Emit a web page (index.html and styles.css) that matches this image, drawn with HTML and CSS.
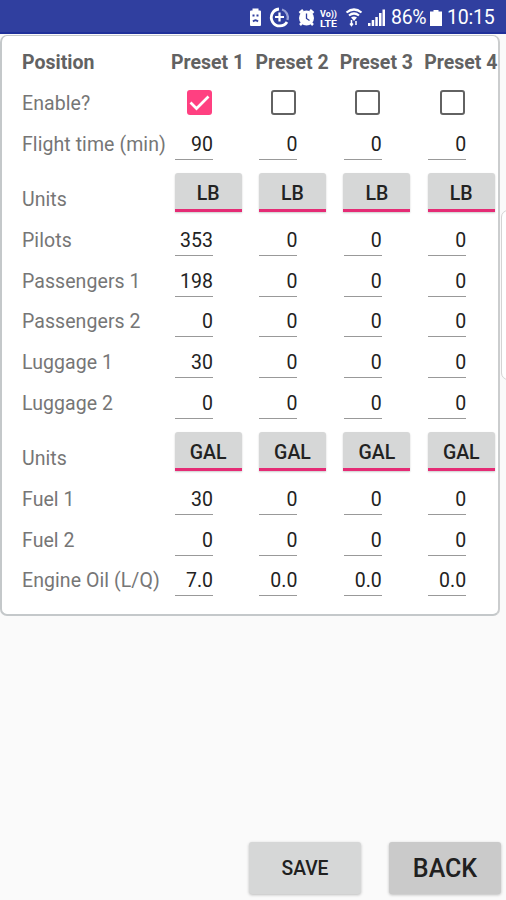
FILE: index.html
```html
<!DOCTYPE html>
<html lang="en">
<head>
<meta charset="utf-8">
<title>Presets</title>
<link rel="stylesheet" href="styles.css">
</head>
<body>
<div class="screen">
<header class="status">
  <svg class="icons" width="146" height="32" viewBox="0 0 146 32" fill="none" stroke="#fff">
    <path d="M1 11.500q0-1 1-1h1.500V8.500h6v2H11q1 0 1 1V25q0 1-1 1H2q-1 0-1-1z" fill="#fff" stroke="none"/>
    <path d="M3.500 15.500h2M7.500 15.500h2M4 21.500q2.500-2.500 5 0" stroke="#303f9f" stroke-width="1.800"/>
    <path d="M30 9A8.500 8.500 0 1 0 38 22" stroke-width="2.800"/>
    <path d="M33 9.500A8.500 8.500 0 0 1 38.500 20" stroke="#97a0d6" stroke-width="2.300"/>
    <path d="M26 17h9M30.500 12.500v9" stroke-width="2.200"/>
    <circle cx="57.500" cy="18" r="7.500" fill="#fff" stroke="none"/>
    <path d="M50.500 13l3.500-3M61 10l3.500 3M53 23l-2 2M62 23l2 2" stroke-width="2.500"/>
    <path d="M57.500 13.500v5l3 2" stroke="#303f9f" stroke-width="1.300"/>
    <text x="71" y="17" class="lte" textLength="17" lengthAdjust="spacingAndGlyphs">Vo))</text>
    <text x="71" y="27" class="lte" textLength="17" lengthAdjust="spacingAndGlyphs">LTE</text>
    <path d="M97.500 12.500Q105 6.500 112.500 12.500M100 15.500Q105 11.500 110 15.500" stroke-width="2.200"/>
    <path d="M102 17.500Q105 15.500 108 17.500L105 21z" fill="#fff" stroke="none"/>
    <path d="M102.500 20v5M101 23.500l1.500 2 1.500-2M107 25v-4" stroke-width="1.500"/>
    <path d="M119 26v-3h2.500v3zM122.700 26v-6h2.500v6zM126.300 26v-9h2.500v9zM130 26V13h2.500v13zM133.500 26V9.500h2.500V26z" fill="#fff" stroke="none"/>
  </svg>
  <span class="percent">86%</span>
  <svg class="battery" width="12" height="16" viewBox="0 0 12 16"><path d="M3.500 0h5v1.500H12V16H0V1.500h3.500z" fill="#fff"/></svg>
  <span class="clock">10:15</span>
</header>
<main class="pager">
<section class="card">
  <div class="row head"><b class="label">Position</b><b>Preset 1</b><b>Preset 2</b><b>Preset 3</b><b>Preset 4</b></div>
  <div class="row"><span class="label">Enable?</span><i class="check on"><svg width="25" height="25" viewBox="0 0 25 25"><path d="M3.500 12.500l6 6L21.500 6.500" fill="none" stroke="#fff" stroke-width="2.700"/></svg></i><i class="check"></i><i class="check"></i><i class="check"></i></div>
  <div class="row"><span class="label">Flight time (min)</span><span class="field">90</span><span class="field">0</span><span class="field">0</span><span class="field">0</span></div>
  <div class="row units"><span class="label">Units</span><span class="toggle">LB</span><span class="toggle">LB</span><span class="toggle">LB</span><span class="toggle">LB</span></div>
  <div class="row"><span class="label">Pilots</span><span class="field">353</span><span class="field">0</span><span class="field">0</span><span class="field">0</span></div>
  <div class="row"><span class="label">Passengers 1</span><span class="field">198</span><span class="field">0</span><span class="field">0</span><span class="field">0</span></div>
  <div class="row"><span class="label">Passengers 2</span><span class="field">0</span><span class="field">0</span><span class="field">0</span><span class="field">0</span></div>
  <div class="row"><span class="label">Luggage 1</span><span class="field">30</span><span class="field">0</span><span class="field">0</span><span class="field">0</span></div>
  <div class="row"><span class="label">Luggage 2</span><span class="field">0</span><span class="field">0</span><span class="field">0</span><span class="field">0</span></div>
  <div class="row units"><span class="label">Units</span><span class="toggle">GAL</span><span class="toggle">GAL</span><span class="toggle">GAL</span><span class="toggle">GAL</span></div>
  <div class="row"><span class="label">Fuel 1</span><span class="field">30</span><span class="field">0</span><span class="field">0</span><span class="field">0</span></div>
  <div class="row"><span class="label">Fuel 2</span><span class="field">0</span><span class="field">0</span><span class="field">0</span><span class="field">0</span></div>
  <div class="row"><span class="label">Engine Oil (L/Q)</span><span class="field">7.0</span><span class="field">0.0</span><span class="field">0.0</span><span class="field">0.0</span></div>
</section>
<section class="next"></section>
</main>
<footer class="actions"><button class="btn save">SAVE</button><button class="btn back">BACK</button></footer>
</div>
</body>
</html>
```
FILE: styles.css
```css
* { box-sizing: border-box; }
body { margin: 0; background: #fafafa; font-family: Roboto, "Liberation Sans", sans-serif; }
.screen { width: 506px; height: 900px; display: flex; flex-direction: column; overflow: hidden; }
.status { height: 34px; flex: none; background: #303f9f; border-bottom: 2px solid #20309a; color: #fff; display: flex; align-items: center; padding-left: 249px; font-size: 19.5px; line-height: 32px; white-space: nowrap; }
.icons { flex: none; margin-right: -4px; }
.lte { font-size: 9.5px; font-weight: 700; fill: #fff; stroke: none; }
.percent { width: 35px; letter-spacing: -.3px; padding-top: 4px; }
.battery { width: 12px; margin: 4px 5px 0 4px; height: 16px; }
.clock { padding-top: 4px; letter-spacing: -.2px; }
.pager { display: flex; align-items: flex-start; height: 582px; flex: none; overflow: hidden; }
.card { width: 500px; height: 581px; flex: none; margin-top: 1px; background: #fff; border: 2px solid #c4c8ca; border-top-width: 1px; border-right-color: #cbcdce; border-radius: 7px; padding: 7px 0 0 20px; }
.next { width: 60px; height: 170px; flex: none; margin: 176px 0 0 1px; border: 1px solid #d4d4d4; border-radius: 7px; background: #fff; }
.row { display: grid; grid-template-columns: 149px repeat(4, 84.4px); height: 40.8px; align-items: center; font-size: 19.5px; line-height: 24px; color: #767676; white-space: nowrap; }
.head { color: #626262; }
.head b { font-weight: 700; letter-spacing: 0; }
.label { letter-spacing: .07px; }
.field { margin-left: 4px; width: 38px; height: 31px; padding-top: 4px; text-align: right; color: #222; border-bottom: 1.500px solid #999; align-self: start; margin-top: 4.4px; }
.check { width: 25px; height: 25px; margin: -4px 0 0 15.5px; border: 2px solid #626262; border-radius: 3px; }
.check.on { border: 0; background: #ff4081; }
.check svg { display: block; }
.units { height: 55px; }
.units .label { padding-top: 14px; }
.toggle { width: 67px; height: 39px; margin-left: 3.6px; background: #d6d7d7; border-bottom: 3px solid #e52b75; border-radius: 3px 3px 0 0; color: #222; font-weight: 500; text-align: center; line-height: 42px; box-shadow: 0 1px 2px #ccc; }
.actions { margin-top: auto; height: 60px; display: flex; justify-content: flex-end; gap: 28px; padding: 2px 5px 0 0; }
.btn { width: 112px; height: 52px; border: 0; border-radius: 3px; background: #d6d7d7; color: #202020; font: 500 19.500px Roboto, sans-serif; box-shadow: 0 1px 3px #bbb; padding: 0; }
.save { font-size: 19.3px; }
.back { background: #cacaca; font-size: 25px; }
```
